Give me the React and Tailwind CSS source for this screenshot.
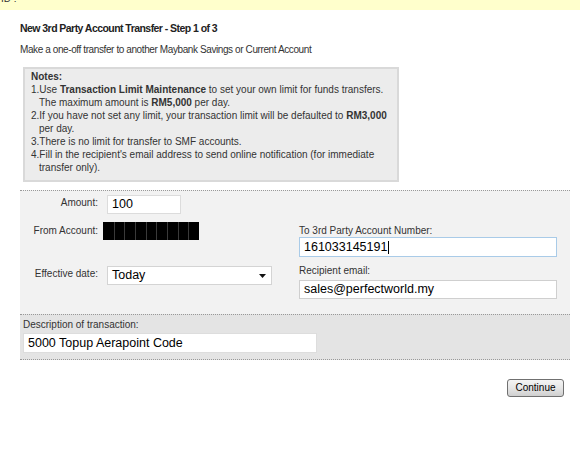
import React from 'react';

const notes = [
  ['1.', <>Use <b>Transaction Limit Maintenance</b> to set your own limit for funds transfers. The maximum amount is <b>RM5,000</b> per day.</>],
  ['2.', <>If you have not set any limit, your transaction limit will be defaulted to <b>RM3,000</b> per day.</>],
  ['3.', <>There is no limit for transfer to SMF accounts.</>],
  ['4.', <>Fill in the recipient's email address to send online notification (for immediate transfer only).</>],
];

function Field({ className = '', children }) {
  return (
    <div className={`h-[19px] bg-white flex items-center pl-[4px] text-[12.5px] text-black leading-none ${className}`}>
      {children}
    </div>
  );
}

export default function App() {
  return (
    <div className="w-[580px] h-[450px] bg-white overflow-hidden text-[#333] font-['Liberation_Sans',Arial,sans-serif]">
      {/* top info bar */}
      <div className="h-[10px] bg-[#ffffcc] overflow-hidden">
        <div className="text-[10px] leading-[10px] -mt-[6px] pl-[1px] text-[#333]">ID :</div>
      </div>

      <div className="pl-[20px]">
        <h1 className="mt-[11px] text-[10.5px] tracking-[-0.55px] font-bold leading-[14px] text-[#222]">
          New 3rd Party Account Transfer - Step 1 of 3
        </h1>
        <p className="mt-[9px] text-[10px] tracking-[-0.4px] leading-[12px]">
          Make a one-off transfer to another Maybank Savings or Current Account
        </p>

        {/* Notes */}
        <div className="mt-[11px] ml-[3px] w-[376px] border-2 border-[#d9d9d9] bg-[#ececec] px-[6px] pt-[1px] pb-[6px] text-[10px] leading-[13px] text-[#333]">
          <div className="font-bold">Notes:</div>
          {notes.map(([n, t]) => (
            <div key={n} className="pl-[8px] -indent-[8px]">
              {n}{t}
            </div>
          ))}
        </div>

        {/* Form section */}
        <div className="mt-[8px] w-[550px] border-t border-dotted border-[#999] bg-[#f2f2f2] flex items-start pb-[15px] text-[10px] leading-[12px]">
          <div className="w-[279px] pt-[4px]">
            <div className="flex items-start">
              <div className="w-[78px] text-right pt-[2px]">Amount:</div>
              <Field className="ml-[9px] w-[74px] border border-[#dcdcdc]">100</Field>
            </div>
            <div className="flex items-center mt-[8px]">
              <div className="w-[78px] text-right">From Account:</div>
              <div className="ml-[5px] flex h-[18px] bg-black">
                {[0, 1, 2, 3, 4, 5, 6, 7, 8].map((i) => (
                  <div key={i} className={`w-[10.67px] h-full ${i > 0 ? 'border-l border-[#3a3a3a]' : ''}`} />
                ))}
              </div>
            </div>
            <div className="flex items-start mt-[26px]">
              <div className="w-[78px] text-right pt-[2px]">Effective date:</div>
              <Field className="ml-[9px] w-[165px] border border-[#d4d4d4] justify-between pr-[5px]">
                <span>Today</span>
                <svg width="7" height="4" viewBox="0 0 7 4"><path d="M0 0h7L3.5 4z" fill="#111" /></svg>
              </Field>
            </div>
          </div>

          <div className="pt-[34px]">
            <div>To 3rd Party Account Number:</div>
            <Field className="w-[258px] h-[20px] border border-[#a9cbe8]">
              161033145191<span className="inline-block w-[1px] h-[13px] bg-black ml-[1px]" />
            </Field>
            <div className="mt-[8px]">Recipient email:</div>
            <Field className="mt-[3px] w-[258px] border border-[#cfcfcf]">sales@perfectworld.my</Field>
          </div>
        </div>

        {/* Description section */}
        <div className="w-[550px] border-t border-b border-dotted border-[#999] bg-[#e4e4e4] pt-[4px] pb-[6px] text-[10px] leading-[12px]">
          <div className="pl-[3px]">Description of transaction:</div>
          <Field className="mt-[2px] ml-[3px] w-[294px] h-[20px] border border-[#dddddd]">5000 Topup Aerapoint Code</Field>
        </div>
      </div>

      <div className="flex justify-end pr-[16px] mt-[19px]">
        <button className="w-[57px] h-[18px] rounded-[3px] border border-[#707070] bg-gradient-to-b from-[#f4f4f4] via-[#e6e6e6] to-[#cfcfcf] text-[10px] leading-none text-black">
          Continue
        </button>
      </div>
    </div>
  );
}
